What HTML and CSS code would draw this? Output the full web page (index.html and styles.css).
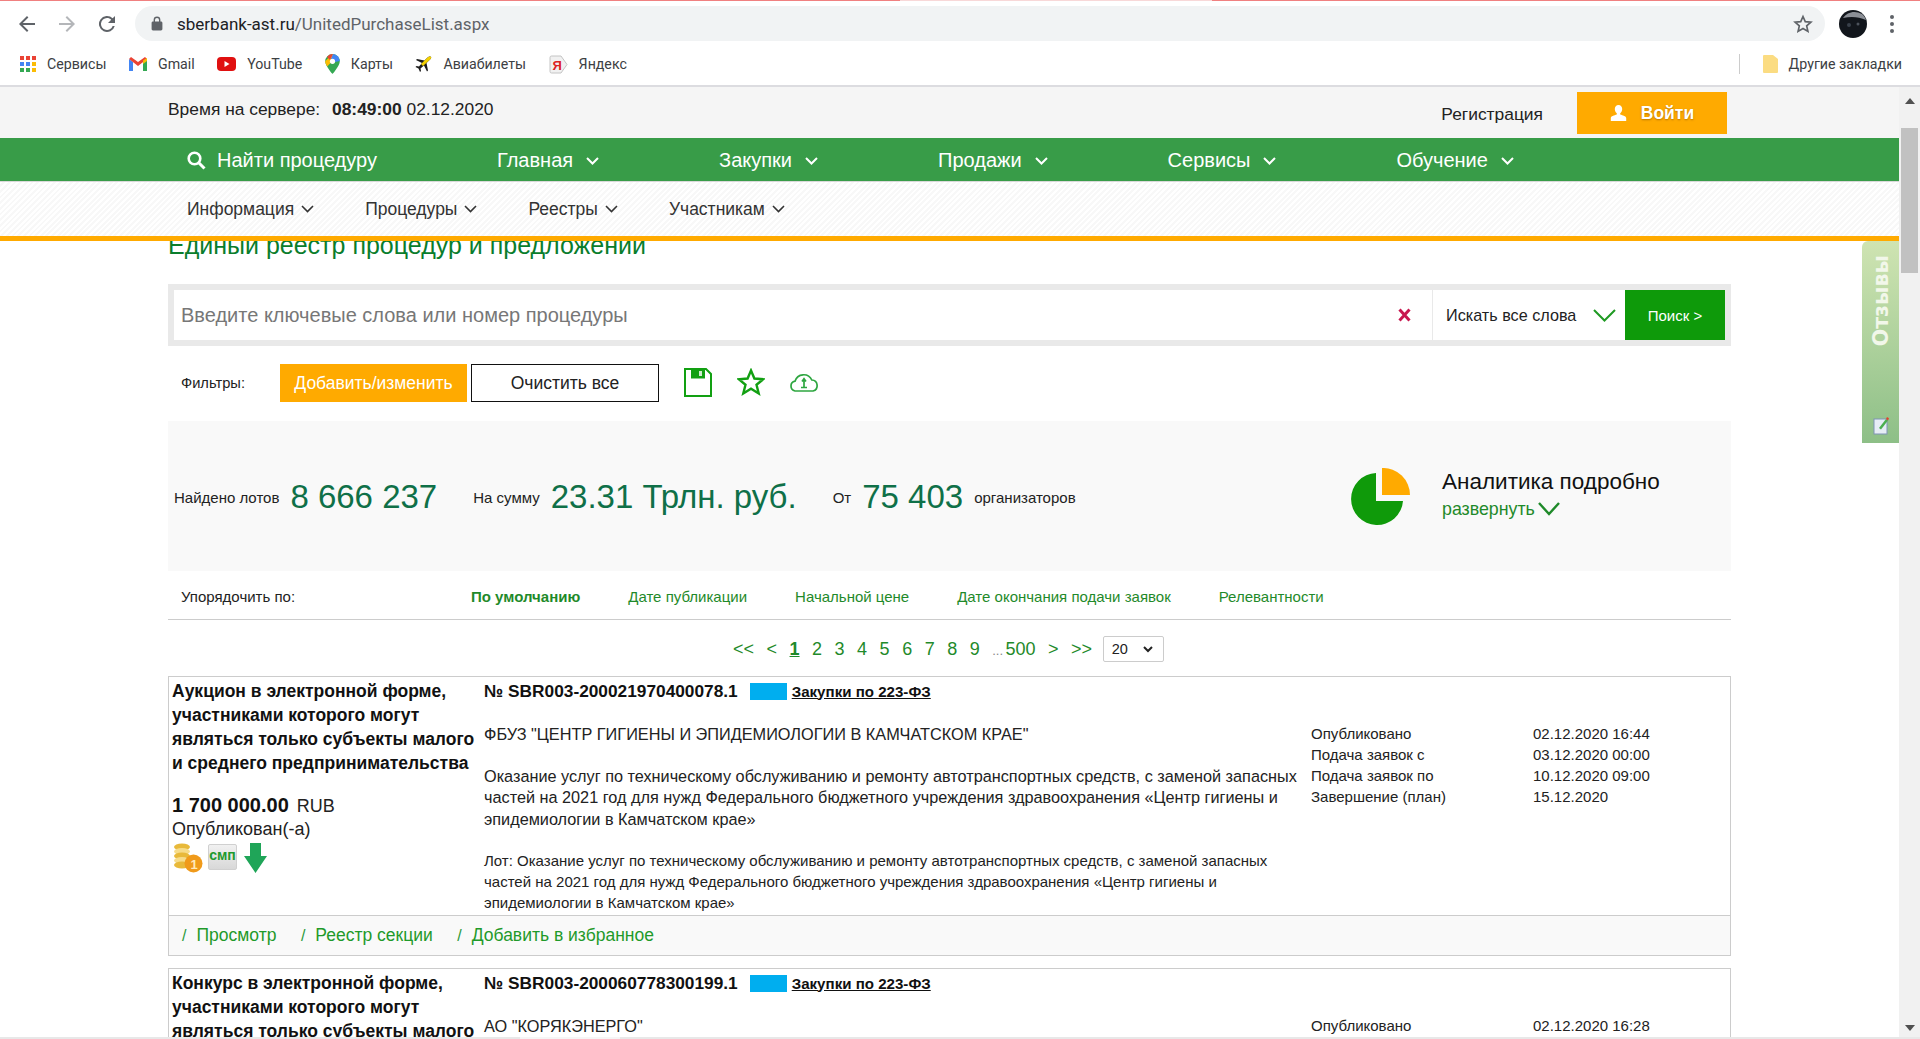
FILE: index.html
```html
<!DOCTYPE html>
<html lang="ru">
<head>
    <meta charset="utf-8">
    <title>Единый реестр процедур и предложений</title>
    <link rel="stylesheet" href="styles.css">
</head>
<body>
<div class="top-strip"></div>
<div class="toolbar">
    <svg class="tb-icon" width="24" height="24" viewBox="0 0 24 24"><path d="M20 11H7.800l5.600-5.600L12 4l-8 8 8 8 1.400-1.400L7.800 13H20z" fill="#5f6368"/></svg>
    <svg class="tb-icon" width="24" height="24" viewBox="0 0 24 24"><path d="M4 11h12.200l-5.600-5.600L12 4l8 8-8 8-1.400-1.400 5.600-5.600H4z" fill="#b4b6b9"/></svg>
    <svg class="tb-icon" width="24" height="24" viewBox="0 0 24 24"><path d="M17.650 6.350A8 8 0 1 0 19.730 14h-2.080A6 6 0 1 1 12 6c1.660 0 3.140.690 4.220 1.780L13 11h7V4z" fill="#5f6368"/></svg>
    <div class="address">
        <svg width="12" height="15" viewBox="0 0 12 15"><path d="M10 5.500H9.400V4a3.400 3.400 0 0 0-6.800 0v1.500H2c-.8 0-1.400.6-1.400 1.400v6.200c0 .8.6 1.400 1.400 1.400h8c.8 0 1.400-.6 1.400-1.400V6.900c0-.8-.6-1.400-1.400-1.400zM4 4a2 2 0 0 1 4 0v1.500H4z" fill="#5f6368"/></svg>
        <span class="url"><b>sberbank-ast.ru</b>/UnitedPurchaseList.aspx</span>
        <svg class="star" width="20" height="20" viewBox="0 0 24 24"><path d="M12 3l2.700 6.200 6.800.6-5.100 4.500 1.500 6.600L12 17.400l-5.900 3.500 1.500-6.600-5.100-4.500 6.800-.6z" fill="none" stroke="#5f6368" stroke-width="2"/></svg>
    </div>
    <svg class="avatar" width="28" height="28" viewBox="0 0 28 28"><circle cx="14" cy="14" r="14" fill="#12161c"/><path d="M4 8c4-6 12-8 19-4 2 2 3 3 4 6-7-3-14-4-23-2z" fill="#8b8f96"/><circle cx="10" cy="15" r="2" fill="#39404a"/><circle cx="19" cy="14" r="1.500" fill="#4d535c"/></svg>
    <svg class="dots" width="4" height="18" viewBox="0 0 4 18"><circle cx="2" cy="2" r="2" fill="#5f6368"/><circle cx="2" cy="9" r="2" fill="#5f6368"/><circle cx="2" cy="16" r="2" fill="#5f6368"/></svg>
</div>
<div class="bookmarks">
    <a class="bm bm-apps">
        <svg width="16" height="16" viewBox="0 0 16 16">
            <rect width="4" height="4" fill="#ea4335"/><rect x="6" width="4" height="4" fill="#ea4335"/><rect x="12" width="4" height="4" fill="#ea4335"/>
            <rect y="6" width="4" height="4" fill="#4285f4"/><rect x="6" y="6" width="4" height="4" fill="#4285f4"/><rect x="12" y="6" width="4" height="4" fill="#fbbc05"/>
            <rect y="12" width="4" height="4" fill="#34a853"/><rect x="6" y="12" width="4" height="4" fill="#34a853"/><rect x="12" y="12" width="4" height="4" fill="#fbbc05"/>
        </svg>
        Сервисы
    </a>
    <a class="bm">
        <svg width="18" height="14" viewBox="0 0 18 14"><path d="M0 2v12h4V5z" fill="#4285f4"/><path d="M18 2v12h-4V5z" fill="#34a853"/><path d="M0 2l9 7 9-7-2-2-7 5-7-5z" fill="#ea4335"/><path d="M14 3.500L18 1v3l-4 3z" fill="#fbbc05"/></svg>
        Gmail
    </a>
    <a class="bm">
        <svg width="19" height="14" viewBox="0 0 19 14"><rect width="19" height="14" rx="4" fill="#e01010"/><path d="M7.500 4v6l5-3z" fill="#fff"/></svg>
        YouTube
    </a>
    <a class="bm">
        <svg width="15" height="20" viewBox="0 0 15 20"><path d="M7.500 0A7.300 7.300 0 0 0 .2 7.300C.2 12 7.500 20 7.500 20s7.300-8 7.300-12.700A7.300 7.300 0 0 0 7.500 0z" fill="#34a853"/><path d="M.2 7.300C.2 9 1 10.700 2.200 12.500l9-9.500L8 0H7.500z" fill="#fbbc05"/><path d="M2 3l3 3 3-6h-.5A7.300 7.300 0 0 0 2 3z" fill="#ea4335"/><path d="M8 0l-2 5 4 3 4.800-1A7.300 7.300 0 0 0 8 0z" fill="#4285f4"/><circle cx="7.500" cy="7.300" r="2.600" fill="#fff"/></svg>
        Карты
    </a>
    <a class="bm">
        <svg width="17" height="17" viewBox="0 0 17 17"><path d="M16 1c-1-1-3 0-4 1L9.500 4.500 2 3 1 4l6 3-3 3.500-2.500-.5-1 1 3 1.500L5 16l1-1-.5-2.500L9 9.500l3 6 1-1-1.500-7.500L14 4.500c1-1 3-2.500 2-3.500z" fill="#1c1c1c"/><path d="M16 1c-1-1-3 0-4 1L6 8l2 2 6-5.500c1-1 3-2.500 2-3.500z" fill="#f3d000"/></svg>
        Авиабилеты
    </a>
    <a class="bm">
        <svg width="19" height="19" viewBox="0 0 19 19"><path d="M2.500 1h9.500l6 8.500-6 8.500H2.500A1.500 1.500 0 0 1 1 16.500v-14A1.500 1.500 0 0 1 2.500 1z" fill="#f1f1f1" stroke="#c4c4c4"/><text x="3.500" y="14.500" class="ya">Я</text></svg>
        Яндекс
    </a>
    <span class="bm-sep"></span>
    <a class="bm">
        <svg width="15" height="18" viewBox="0 0 15 18"><path d="M1 0h9l5 4v13a1 1 0 0 1-1 1H1a1 1 0 0 1-1-1V1a1 1 0 0 1 1-1z" fill="#fbdc82"/></svg>
        Другие закладки
    </a>
</div>

<div class="viewport">
    <div class="page">
        <div class="head">
            <div class="head-top">
                <div class="head-in">
                    <div class="server-time">Время на сервере: <b>08:49:00</b> 02.12.2020</div>
                    <a class="reg">Регистрация</a>
                    <a class="login">
                        <svg width="17" height="16" viewBox="0 0 17 16"><path d="M8.500 0c2.300 0 3.700 1.800 3.700 4 0 1.800-.8 3.300-2 4.200v1.300c2.500.8 6 1.800 6 3.500V16H.8v-3c0-1.700 3.500-2.700 6-3.500V8.200c-1.200-.9-2-2.400-2-4.200 0-2.200 1.400-4 3.700-4z" fill="#fff"/></svg>
                        Войти
                    </a>
                </div>
            </div>
            <div class="nav-main">
                <a class="nav-search">
                    <svg width="19" height="19" viewBox="0 0 19 19"><circle cx="7.500" cy="7.500" r="5.800" fill="none" stroke="#fff" stroke-width="2.600"/><path d="M12 12l5.500 5.500" stroke="#fff" stroke-width="3"/></svg>
                    Найти процедуру
                </a>
                <a class="nav-link">Главная <svg class="chev" width="13" height="8" viewBox="0 0 13 8"><path d="M1 1l5.500 5.500L12 1" fill="none" stroke="#fff" stroke-width="2"/></svg></a>
                <a class="nav-link">Закупки <svg class="chev" width="13" height="8" viewBox="0 0 13 8"><path d="M1 1l5.500 5.500L12 1" fill="none" stroke="#fff" stroke-width="2"/></svg></a>
                <a class="nav-link">Продажи <svg class="chev" width="13" height="8" viewBox="0 0 13 8"><path d="M1 1l5.500 5.500L12 1" fill="none" stroke="#fff" stroke-width="2"/></svg></a>
                <a class="nav-link">Сервисы <svg class="chev" width="13" height="8" viewBox="0 0 13 8"><path d="M1 1l5.500 5.500L12 1" fill="none" stroke="#fff" stroke-width="2"/></svg></a>
                <a class="nav-link">Обучение <svg class="chev" width="13" height="8" viewBox="0 0 13 8"><path d="M1 1l5.500 5.500L12 1" fill="none" stroke="#fff" stroke-width="2"/></svg></a>
            </div>
            <div class="nav-sub">
                <a class="sub-link">Информация <svg class="chev" width="13" height="8" viewBox="0 0 13 8"><path d="M1 1l5.500 5.500L12 1" fill="none" stroke="#333" stroke-width="1.600"/></svg></a>
                <a class="sub-link">Процедуры <svg class="chev" width="13" height="8" viewBox="0 0 13 8"><path d="M1 1l5.500 5.500L12 1" fill="none" stroke="#333" stroke-width="1.600"/></svg></a>
                <a class="sub-link">Реестры <svg class="chev" width="13" height="8" viewBox="0 0 13 8"><path d="M1 1l5.500 5.500L12 1" fill="none" stroke="#333" stroke-width="1.600"/></svg></a>
                <a class="sub-link">Участникам <svg class="chev" width="13" height="8" viewBox="0 0 13 8"><path d="M1 1l5.500 5.500L12 1" fill="none" stroke="#333" stroke-width="1.600"/></svg></a>
            </div>
        </div>

        <div class="content">
            <div class="wrap">
                <h1 class="page-title">Единый реестр процедур и предложений</h1>

                <div class="search">
                    <div class="search-in">
                        <span class="search-ph">Введите ключевые слова или номер процедуры</span>
                        <svg class="clear-x" width="13" height="14" viewBox="0 0 13 14"><path d="M1.500 1.500l10 11M11.500 1.500l-10 11" stroke="#c8174f" stroke-width="3"/></svg>
                        <div class="search-mode">
                            Искать все слова
                            <svg width="23" height="13" viewBox="0 0 23 13"><path d="M1 1l10.500 10.500L22 1" fill="none" stroke="#1f9a23" stroke-width="2"/></svg>
                        </div>
                        <a class="search-btn">Поиск &gt;</a>
                    </div>
                </div>

                <div class="filters">
                    <span class="filters-label">Фильтры:</span>
                    <a class="btn-orange">Добавить/изменить</a>
                    <a class="btn-clear">Очистить все</a>
                    <svg class="f-save" width="28" height="29" viewBox="0 0 28 29"><path d="M1 1h21l5 5v22H1z" fill="#fff" stroke="#12a012" stroke-width="2"/><path d="M7 1h14v9.500H7z" fill="#12a012"/><rect x="15" y="3" width="3" height="5" fill="#cfeccf"/></svg>
                    <svg class="f-star" width="28" height="28" viewBox="0 0 28 28"><path d="M14 2.500l3.400 8 8.900.7-6.800 5.600 2.200 8.600-7.700-4.700-7.700 4.700 2.200-8.600-6.800-5.600 8.900-.7z" fill="none" stroke="#12a012" stroke-width="2.400"/></svg>
                    <svg class="f-cloud" width="30" height="20" viewBox="0 0 30 20"><path d="M7 19H6A5 5 0 0 1 6 9.200 9 9 0 0 1 22.800 8 5.600 5.600 0 0 1 24 19z" fill="none" stroke="#2ea640" stroke-width="1.700"/><path d="M15 7v8M13 9.500l2-2.700 2 2.700M12 15.500h6" fill="none" stroke="#2ea640" stroke-width="1.700"/></svg>
                </div>

                <div class="stats">
                    <span class="st-label st-first">Найдено лотов</span><span class="st-num">8 666 237</span>
                    <span class="st-label st-gap">На сумму</span><span class="st-num">23.31 Трлн. руб.</span>
                    <span class="st-label st-gap">От</span><span class="st-num">75 403</span>
                    <span class="st-label st-org">организаторов</span>
                    <svg class="pie" width="60" height="57" viewBox="0 0 60 57"><path d="M26 5A26 26 0 1 0 53 33H26z" fill="#0f9a0a"/><path d="M32 0a27 27 0 0 1 28 27H32z" fill="#ffaa00"/></svg>
                    <div class="analytics">
                        <div class="an-title">Аналитика подробно</div>
                        <a class="an-more">развернуть <svg width="22" height="14" viewBox="0 0 22 14"><path d="M1 1l10 11L21 1" fill="none" stroke="#1f8a2a" stroke-width="2.400"/></svg></a>
                    </div>
                </div>

                <div class="sort">
                    <span class="sort-label">Упорядочить по:</span>
                    <a class="sort-link sort-on">По умолчанию</a>
                    <a class="sort-link">Дате публикации</a>
                    <a class="sort-link">Начальной цене</a>
                    <a class="sort-link">Дате окончания подачи заявок</a>
                    <a class="sort-link">Релевантности</a>
                </div>

                <div class="pager">
                    <a>&lt;&lt;</a><a>&lt;</a><a class="cur">1</a><a>2</a><a>3</a><a>4</a><a>5</a><a>6</a><a>7</a><a>8</a><a>9</a><span class="dots-txt">...</span><a class="p500">500</a><a>&gt;</a><a>&gt;&gt;</a>
                    <div class="pg-size">20 <svg width="10" height="7" viewBox="0 0 10 7"><path d="M1 1l4 4 4-4" fill="none" stroke="#222" stroke-width="2"/></svg></div>
                </div>

                <div class="card">
                    <div class="card-body">
                        <div class="c-left">
                            <div class="c-type">Аукцион в электронной форме, участниками которого могут являться только субъекты малого и среднего предпринимательства</div>
                            <div class="c-price"><b>1 700 000.00</b> <span>RUB</span></div>
                            <div class="c-status">Опубликован(-а)</div>
                            <div class="c-icons">
                                <svg width="31" height="30" viewBox="0 0 31 30"><ellipse cx="10" cy="4" rx="8" ry="3.500" fill="#e8b93a"/><ellipse cx="10" cy="8.500" rx="8" ry="3.500" fill="#f6dc8a"/><ellipse cx="10" cy="13" rx="8" ry="3.500" fill="#e8b93a"/><ellipse cx="10" cy="17.500" rx="8" ry="3.500" fill="#f6dc8a"/><ellipse cx="10" cy="22" rx="8" ry="3.500" fill="#e8b93a"/><circle cx="21.500" cy="20.500" r="9" fill="#f09a1a"/><text x="18.500" y="25.500" class="coin-n">1</text></svg>
                                <span class="smp">смп</span>
                                <svg width="23" height="30" viewBox="0 0 23 30"><path d="M6 0h11v13h6L11.500 30 0 13h6z" fill="#1fa558"/></svg>
                            </div>
                        </div>
                        <div class="c-mid">
                            <div class="c-num"><b>№ SBR003-200021970400078.1</b><i class="law-mark"></i><a class="law">Закупки по 223-ФЗ</a></div>
                            <div class="c-org">ФБУЗ "ЦЕНТР ГИГИЕНЫ И ЭПИДЕМИОЛОГИИ В КАМЧАТСКОМ КРАЕ"</div>
                            <div class="c-desc">Оказание услуг по техническому обслуживанию и ремонту автотранспортных средств, с заменой запасных частей на 2021 год для нужд Федерального бюджетного учреждения здравоохранения «Центр гигиены и эпидемиологии в Камчатском крае»</div>
                            <div class="c-lot">Лот: Оказание услуг по техническому обслуживанию и ремонту автотранспортных средств, с заменой запасных частей на 2021 год для нужд Федерального бюджетного учреждения здравоохранения «Центр гигиены и эпидемиологии в Камчатском крае»</div>
                        </div>
                        <div class="c-dates">
                            <span>Опубликовано</span><span>02.12.2020 16:44</span>
                            <span>Подача заявок с</span><span>03.12.2020 00:00</span>
                            <span>Подача заявок по</span><span>10.12.2020 09:00</span>
                            <span>Завершение (план)</span><span>15.12.2020</span>
                        </div>
                    </div>
                    <div class="card-foot">
                        <a><i>/</i>Просмотр</a>
                        <a><i>/</i>Реестр секции</a>
                        <a><i>/</i>Добавить в избранное</a>
                    </div>
                </div>

                <div class="card">
                    <div class="card-body">
                        <div class="c-left">
                            <div class="c-type">Конкурс в электронной форме, участниками которого могут являться только субъекты малого и среднего предпринимательства</div>
                        </div>
                        <div class="c-mid">
                            <div class="c-num"><b>№ SBR003-200060778300199.1</b><i class="law-mark"></i><a class="law">Закупки по 223-ФЗ</a></div>
                            <div class="c-org">АО "КОРЯКЭНЕРГО"</div>
                        </div>
                        <div class="c-dates">
                            <span>Опубликовано</span><span>02.12.2020 16:28</span>
                        </div>
                    </div>
                </div>
            </div>
        </div>

        <div class="feedback">
            <span class="fb-text">Отзывы</span>
            <svg width="16" height="19" viewBox="0 0 16 19"><rect x="1" y="3" width="13" height="15" fill="#e6edf5" stroke="#7f93b5"/><path d="M6 12l7-9 2 1.500-7 9z" fill="#4caf50"/><path d="M13 3l1-2 2 1.300-1 2.200z" fill="#e0452f"/></svg>
        </div>
    </div>

    <div class="scrollbar">
        <svg class="sb-arrow" width="10" height="6" viewBox="0 0 10 6"><path d="M0 6l5-6 5 6z" fill="#505050"/></svg>
        <div class="sb-thumb"></div>
        <svg class="sb-arrow sb-down" width="10" height="6" viewBox="0 0 10 6"><path d="M0 0l5 6 5-6z" fill="#505050"/></svg>
    </div>
</div>
<div class="h-scroll"><span></span></div>
</body>
</html>
```

FILE: styles.css
```css
* {
    padding: 0;
    margin: 0;
    box-sizing: border-box;
}
html, body {
    height: 100%;
    overflow: hidden;
}
body {
    display: flex;
    flex-direction: column;
    background: #fff;
    font-family: "Liberation Sans", Arial, "Noto Sans", sans-serif;
    color: #222;
}

/* browser chrome */
.top-strip {
    height: 1px;
    flex: none;
    background: linear-gradient(to right, #f08080 0, #f08080 900px, #f8d8d8 900px, #f8d8d8 1212px, #f08080 1212px);
}
.toolbar {
    flex: none;
    height: 43px;
    display: flex;
    align-items: center;
    padding: 2px 26px 0 15px;
}
.tb-icon {
    margin-right: 16px;
}
.address {
    flex: 1;
    height: 35px;
    border-radius: 18px;
    background: #f1f3f4;
    display: flex;
    align-items: center;
    padding: 0 12px 0 16px;
    font-family: Roboto, "Noto Sans", sans-serif;
    font-size: 17px;
    color: #5f6368;
}
.url {
    margin-left: 14px;
    flex: 1;
}
.url b {
    font-weight: 400;
    color: #202124;
}
.avatar {
    margin: 0 23px 0 14px;
}
.bookmarks {
    flex: none;
    height: 43px;
    padding: 0 18px 1px 20px;
    display: flex;
    align-items: center;
    gap: 22.500px;
    border-bottom: 2px solid #dcdce0;
    font-family: Roboto, "Noto Sans", sans-serif;
    font-size: 14.200px;
    color: #3c4043;
}
.bm {
    display: flex;
    align-items: center;
    gap: 11px;
}
.bm-sep {
    margin-left: auto;
    width: 1px;
    height: 20px;
    background: #ccc;
}
.ya {
    font-family: "Liberation Sans", sans-serif;
    font-size: 13px;
    font-weight: bold;
    fill: #d22;
}

/* page area */
.viewport {
    flex: 1;
    min-height: 0;
    display: flex;
}
.page {
    flex: 1;
    min-width: 0;
    position: relative;
    display: flex;
    flex-direction: column;
    overflow: hidden;
}
.scrollbar {
    flex: none;
    width: 21px;
    background: #f1f1f1;
    display: flex;
    flex-direction: column;
    align-items: center;
    padding-top: 11px;
}
.sb-thumb {
    width: 17px;
    height: 145px;
    margin-top: 24px;
    background: #c1c1c1;
}
.sb-down {
    margin-top: auto;
    margin-bottom: 6px;
}
.h-scroll {
    flex: none;
    height: 2px;
    background: #e8e8e8;
}
.h-scroll span {
    display: block;
    width: 100px;
    height: 2px;
    margin-left: 520px;
    background: #f6f6f6;
}

/* header */
.head {
    flex: none;
    position: relative;
    z-index: 2;
    background: #fff;
}
.head-top {
    height: 51px;
    background: #f5f5f5;
}
.head-in {
    height: 100%;
    width: 1563px;
    margin: 0 auto;
    display: flex;
    align-items: flex-start;
}
.server-time {
    font-size: 17.400px;
    line-height: 19px;
    margin-top: 13px;
    color: #222;
}
.server-time b {
    margin-left: 7px;
}
.reg {
    margin-left: auto;
    margin-top: 17px;
    margin-right: 34px;
    font-size: 17.400px;
    line-height: 20px;
    color: #222;
}
.login {
    margin: 5px 4px 0 0;
    width: 150px;
    height: 42px;
    background: #ffaa00;
    color: #fff;
    font-size: 17.500px;
    font-weight: bold;
    display: flex;
    align-items: center;
    justify-content: center;
    gap: 14px;
    text-shadow: 0 1px 2px rgba(120, 70, 0, .5);
}
.nav-main {
    height: 44px;
    background: #389c48;
    display: flex;
    align-items: center;
    gap: 120px;
    padding: 2px 0 0 187px;
    color: #fff;
    font-size: 20px;
    border-bottom: 1px solid #d9d9d9;
}
.nav-search {
    display: flex;
    align-items: center;
    gap: 11px;
}
.nav-link, .sub-link {
    display: flex;
    align-items: center;
    gap: 13px;
}
.nav-sub {
    height: 59px;
    display: flex;
    align-items: center;
    gap: 51px;
    padding: 0 0 0 187px;
    font-size: 17.500px;
    color: #333;
    border-bottom: 5px solid #ffaa00;
    background: repeating-linear-gradient(135deg, #fff 0, #fff 2px, #f8f8f8 2px, #f8f8f8 4px);
}
.sub-link {
    gap: 7px;
}

/* content */
.content {
    flex: 1;
    min-height: 0;
    overflow: hidden;
}
.wrap {
    width: 1563px;
    margin: 0 auto;
}
.page-title {
    font-size: 25px;
    font-weight: 400;
    line-height: 28px;
    height: 28px;
    margin-top: -10px;
    color: #0a7d2c;
}
.search {
    margin-top: 25px;
    height: 62px;
    padding: 6px;
    background: #e9e9e9;
}
.search-in {
    height: 50px;
    background: #fff;
    display: flex;
    align-items: center;
}
.search-ph {
    flex: 1;
    padding-left: 7px;
    font-size: 20px;
    color: #777;
}
.clear-x {
    margin-right: 21px;
}
.search-mode {
    height: 100%;
    width: 193px;
    border-left: 1px solid #e9e9e9;
    padding-left: 13px;
    display: flex;
    align-items: center;
    gap: 17px;
    font-size: 16.200px;
    color: #222;
}
.search-btn {
    width: 100px;
    height: 100%;
    background: #0e9a0a;
    color: #fff;
    font-size: 15px;
    display: flex;
    align-items: center;
    justify-content: center;
}
.filters {
    margin-top: 18px;
    height: 38px;
    display: flex;
    align-items: center;
    padding-left: 13px;
}
.filters-label {
    width: 99px;
    font-size: 14.700px;
}
.btn-orange, .btn-clear {
    height: 38px;
    display: flex;
    align-items: center;
    justify-content: center;
    font-size: 17.500px;
}
.btn-orange {
    width: 187px;
    background: #ffaa00;
    color: #fff;
    margin-right: 4px;
}
.btn-clear {
    width: 188px;
    border: 1px solid #111;
    color: #222;
}
.f-save {
    margin: -2px 0 0 25px;
}
.f-star {
    margin: -3px 0 0 25px;
}
.f-cloud {
    margin: -3px 0 0 24px;
}
.stats {
    margin-top: 19px;
    height: 150px;
    background: #f9f9f9;
    display: flex;
    align-items: center;
}
.st-label {
    font-size: 15px;
    margin-top: 3px;
}
.st-first {
    margin-left: 6px;
}
.st-gap {
    margin-left: 36px;
}
.st-num {
    margin: 2px 0 0 11px;
    font-size: 33px;
    color: #0f7048;
}
.st-org {
    margin-left: 11px;
}
.pie {
    margin-left: auto;
}
.analytics {
    width: 289px;
    margin-left: 32px;
    margin-top: -5px;
}
.an-title {
    font-size: 22.500px;
    line-height: 30px;
    color: #111;
}
.an-more {
    display: flex;
    align-items: center;
    gap: 3px;
    font-size: 17.800px;
    line-height: 24px;
    color: #1f8a2a;
}
.sort {
    height: 49px;
    display: flex;
    align-items: center;
    padding: 2px 0 0 13px;
    border-bottom: 1px solid #ccc;
    font-size: 15px;
}
.sort-label {
    width: 290px;
}
.sort-link {
    margin-right: 48px;
    color: #1f8a2a;
}
.sort-on {
    font-weight: bold;
}
.pager {
    height: 56px;
    display: flex;
    align-items: center;
    gap: 12.500px;
    padding: 2px 0 0 565px;
    color: #1f8a2a;
    font-size: 18px;
}
.cur {
    font-weight: bold;
    text-decoration: underline;
}
.dots-txt {
    font-size: 13px;
    color: #888;
    margin-right: -10px;
    align-self: flex-end;
    margin-bottom: 18px;
}
.pg-size {
    width: 61px;
    height: 26px;
    margin-left: -2px;
    border: 1px solid #ccc;
    border-radius: 2px;
    display: flex;
    align-items: center;
    justify-content: space-between;
    padding: 0 10px 0 8px;
    font-size: 14.500px;
    color: #222;
}
.card {
    border: 1px solid #ccc;
    margin-bottom: 12px;
}
.card-body {
    display: grid;
    grid-template-columns: 312px 827px 1fr;
    padding: 2px 0 0 3px;
    height: 238px;
}
.c-type {
    font-size: 17.500px;
    font-weight: bold;
    line-height: 24px;
    color: #111;
}
.c-price {
    margin-top: 18px;
    font-size: 18px;
    line-height: 24px;
}
.c-price b {
    font-size: 20px;
    color: #111;
    margin-right: 3px;
}
.c-status {
    font-size: 18px;
    line-height: 23px;
}
.c-icons {
    margin-top: 2px;
    display: flex;
    align-items: flex-start;
    gap: 5px;
}
.smp {
    width: 29px;
    height: 26px;
    margin-top: 1px;
    background: linear-gradient(to bottom, #f1f1f1, #d8d8d8);
    border: 1px solid #d0d0d0;
    border-radius: 2px;
    text-align: center;
    font-size: 14px;
    line-height: 20px;
    font-weight: bold;
    color: #1f9a2f;
    margin-right: 2px;
}
.c-num {
    display: flex;
    align-items: center;
    height: 24px;
    font-size: 17.300px;
    color: #111;
}
.law-mark {
    width: 37px;
    height: 17px;
    margin: 0 5px 0 12px;
    background: #00aeef;
}
.law {
    font-size: 15.100px;
    font-weight: bold;
    text-decoration: underline;
}
.c-org {
    margin-top: 21px;
    font-size: 16.300px;
    line-height: 21px;
}
.c-desc {
    margin-top: 21px;
    font-size: 16.250px;
    line-height: 21.400px;
    width: 825px;
}
.c-lot {
    margin-top: 20px;
    font-size: 15px;
    line-height: 21px;
    width: 790px;
}
.c-dates {
    display: grid;
    grid-template-columns: 222px 1fr;
    grid-auto-rows: 21px;
    align-content: start;
    margin-top: 44px;
    font-size: 15px;
    line-height: 21px;
}
.card-foot {
    height: 40px;
    border-top: 1px solid #ccc;
    background: #f9f9f9;
    display: flex;
    align-items: center;
    padding-left: 13px;
    gap: 24.500px;
    font-size: 17.500px;
    color: #1f9a2a;
}
.card-foot i {
    font-style: normal;
    color: #2a9a3a;
    margin-right: 10px;
    font-size: 16px;
}

/* side tab over the page */
.feedback {
    position: absolute;
    z-index: 1;
    top: 154px;
    right: 0;
    width: 37px;
    height: 202px;
    border-top-left-radius: 6px;
    background: linear-gradient(to bottom, #cfe4b2, #8dbf87);
    display: flex;
    flex-direction: column;
    align-items: center;
    justify-content: space-between;
    padding: 14px 0 8px;
}
.fb-text {
    writing-mode: vertical-rl;
    transform: rotate(180deg);
    font-family: "DejaVu Sans", sans-serif;
    font-size: 20.500px;
    font-weight: bold;
    color: #f2f7ea;
}
.coin-n {
    font-size: 13px;
    font-weight: bold;
    fill: #ffe9b8;
}
```
